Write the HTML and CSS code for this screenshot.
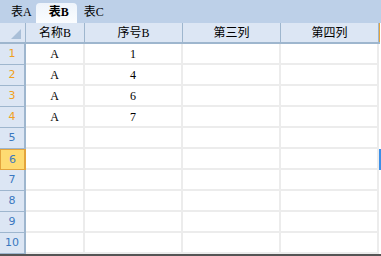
FILE: index.html
```
<!DOCTYPE html>
<html lang="zh-CN">
<head>
    <meta charset="UTF-8">
    <title>表B</title>
    <link rel="stylesheet" href="styles.css">
</head>
<body>
    <div class="tabs">
        <div class="tab">表A</div>
        <div class="tab active">表B</div>
        <div class="tab">表C</div>
    </div>
    <div class="sheet">
        <div class="corner"><span class="tri"></span></div>
        <div class="colhead">名称B</div>
        <div class="colhead">序号B</div>
        <div class="colhead">第三列</div>
        <div class="colhead">第四列</div>
        <div class="edge mark-orange"></div>

        <div class="rowhead used">1</div><div class="cell">A</div><div class="cell">1</div><div class="cell"></div><div class="cell"></div><div class="edge"></div>
        <div class="rowhead used">2</div><div class="cell">A</div><div class="cell">4</div><div class="cell"></div><div class="cell"></div><div class="edge"></div>
        <div class="rowhead used">3</div><div class="cell">A</div><div class="cell">6</div><div class="cell"></div><div class="cell"></div><div class="edge"></div>
        <div class="rowhead used">4</div><div class="cell">A</div><div class="cell">7</div><div class="cell"></div><div class="cell"></div><div class="edge"></div>
        <div class="rowhead">5</div><div class="cell"></div><div class="cell"></div><div class="cell"></div><div class="cell"></div><div class="edge"></div>
        <div class="rowhead selected">6</div><div class="cell"></div><div class="cell"></div><div class="cell"></div><div class="cell"></div><div class="edge mark-blue"></div>
        <div class="rowhead">7</div><div class="cell"></div><div class="cell"></div><div class="cell"></div><div class="cell"></div><div class="edge"></div>
        <div class="rowhead">8</div><div class="cell"></div><div class="cell"></div><div class="cell"></div><div class="cell"></div><div class="edge"></div>
        <div class="rowhead">9</div><div class="cell"></div><div class="cell"></div><div class="cell"></div><div class="cell"></div><div class="edge"></div>
        <div class="rowhead">10</div><div class="cell"></div><div class="cell"></div><div class="cell"></div><div class="cell"></div><div class="edge"></div>
    </div>
    <div class="bottom"></div>
</body>
</html>
```
FILE: styles.css
```
body, html {
    margin: 0;
    padding: 0;
    background: #fff;
    font-family: "DejaVu Sans Mono", "Noto Sans CJK SC", monospace;
    font-size: 12px;
    color: #000;
    overflow: hidden;
}
.tabs {
    display: flex;
    align-items: flex-end;
    height: 23px;
    padding-left: 11px;
    background: #bdd0e8;
    box-sizing: border-box;
}
.tab {
    height: 20px;
    line-height: 19px;
    font-family: "Liberation Serif", "Noto Sans CJK SC", serif;
    font-size: 12px;
}
.tab.active {
    width: 41px;
    padding-left: 5px;
    box-sizing: border-box;
    text-align: center;
    font-weight: bold;
    background: linear-gradient(#eef4fb, #fbfdff);
    border-radius: 4px 4px 0 0;
    margin: 0 7px 0 4px;
}
.sheet {
    display: grid;
    grid-template-columns: 26px 59px 98px 98px 98px 2px;
    grid-auto-rows: 21px;
}
.sheet > div {
    box-sizing: border-box;
}
.corner {
    background: #dce6f4;
    border-right: 1px solid #9eb6ce;
    border-bottom: 2px solid #9eb6ce;
    position: relative;
}
.tri {
    position: absolute;
    left: 11px;
    top: 6px;
    width: 0;
    height: 0;
    border-left: 10px solid transparent;
    border-bottom: 10px solid #a9bfd8;
}
.colhead {
    background: #dce6f4;
    border-right: 1px solid #9eb6ce;
    border-bottom: 2px solid #9eb6ce;
    text-align: center;
    line-height: 20px;
    font-family: "Liberation Serif", "Noto Sans CJK SC", serif;
}
.rowhead {
    background: #dce6f4;
    border-right: 2px solid #9eb6ce;
    border-bottom: 1px solid #9eb6ce;
    text-align: center;
    line-height: 20px;
    color: #3a78c0;
    font-family: "DejaVu Sans", sans-serif;
    font-size: 11px;
}
.rowhead.used {
    color: #f0a020;
}
.rowhead.selected {
    background: #fedb72;
    border: 1px solid #e3a43c;
    border-right-width: 2px;
    color: #3a78c0;
}
.cell {
    border-right: 2px solid #ececec;
    border-bottom: 2px solid #ececec;
    text-align: center;
    line-height: 20px;
    font-family: "Liberation Serif", serif;
}
.edge {
    background: #fff;
}
.mark-orange {
    background: #e3a43c;
    border-bottom: 2px solid #9eb6ce;
    width: 1px;
}
.mark-blue {
    background: #3b8fe8;
}
.bottom {
    height: 2px;
    background: #555;
}
```
